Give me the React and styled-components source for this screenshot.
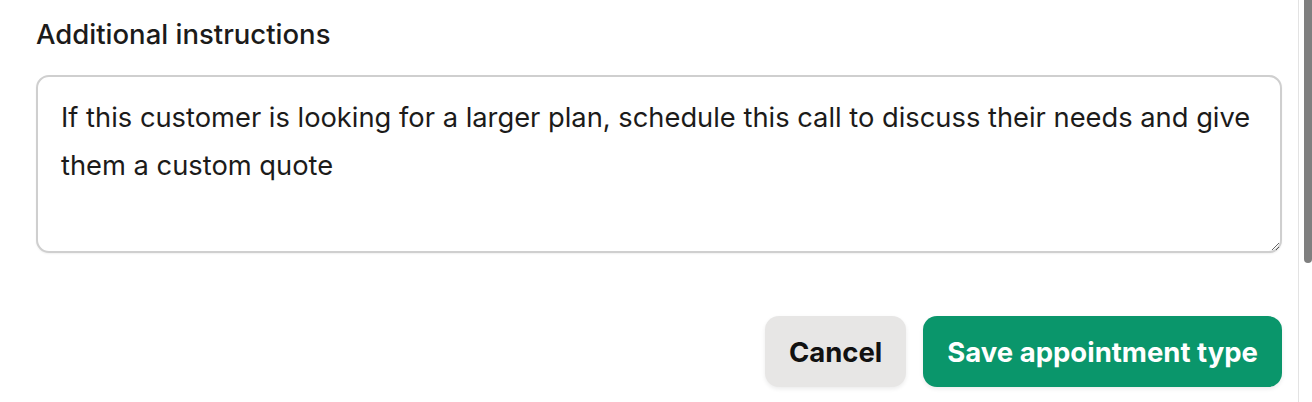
import React from "react";
import styled, { createGlobalStyle } from "styled-components";

const GlobalStyle = createGlobalStyle`
  html, body {
    margin: 0;
    padding: 0;
    background: #ffffff;
    font-family: Inter, "Noto Sans", sans-serif;
    color: #1c1b1a;
  }
`;

const Page = styled.div`
  display: flex;
  width: 1312px;
  height: 402px;
  overflow: hidden;
`;

const Content = styled.div`
  flex: 1;
  display: flex;
  flex-direction: column;
  padding: 18px 16px 0 36px;
`;

const Label = styled.label`
  font-size: 27.5px;
  font-weight: 500;
  line-height: 32px;
`;

const TextArea = styled.textarea`
  margin-top: 25px;
  height: 178px;
  box-sizing: border-box;
  padding: 17px 23px;
  border: 2px solid #cfcfcf;
  border-radius: 13px;
  font-family: inherit;
  font-size: 27.3px;
  line-height: 48px;
  color: #1c1b1a;
  resize: vertical;
  box-shadow: 0 1px 2px rgba(0, 0, 0, 0.06);
  outline: none;
`;

const Actions = styled.div`
  display: flex;
  justify-content: flex-end;
  gap: 17px;
  margin-top: 63px;
`;

const Button = styled.button`
  height: 71px;
  padding: 0 24px;
  border: none;
  border-radius: 14px;
  font-family: inherit;
  font-size: 27.5px;
  font-weight: 700;
  cursor: pointer;
  background: ${(p) => (p.$primary ? "#0a966b" : "#e7e6e5")};
  color: ${(p) => (p.$primary ? "#ffffff" : "#111111")};
  box-shadow: 0 2px 4px rgba(0, 0, 0, 0.08);
`;

const ScrollTrack = styled.div`
  width: 13px;
  border-left: 1px solid #e3e3e3;
  display: flex;
  justify-content: flex-end;
`;

const ScrollThumb = styled.div`
  width: 8px;
  height: 263px;
  background: #7f7f7f;
  border-radius: 0 0 4px 4px;
`;

export default function App() {
  return (
    <>
      <GlobalStyle />
      <Page>
        <Content>
          <Label htmlFor="instructions">Additional instructions</Label>
          <TextArea
            id="instructions"
            defaultValue="If this customer is looking for a larger plan, schedule this call to discuss their needs and give them a custom quote"
          />
          <Actions>
            <Button>Cancel</Button>
            <Button $primary>Save appointment type</Button>
          </Actions>
        </Content>
        <ScrollTrack>
          <ScrollThumb />
        </ScrollTrack>
      </Page>
    </>
  );
}
